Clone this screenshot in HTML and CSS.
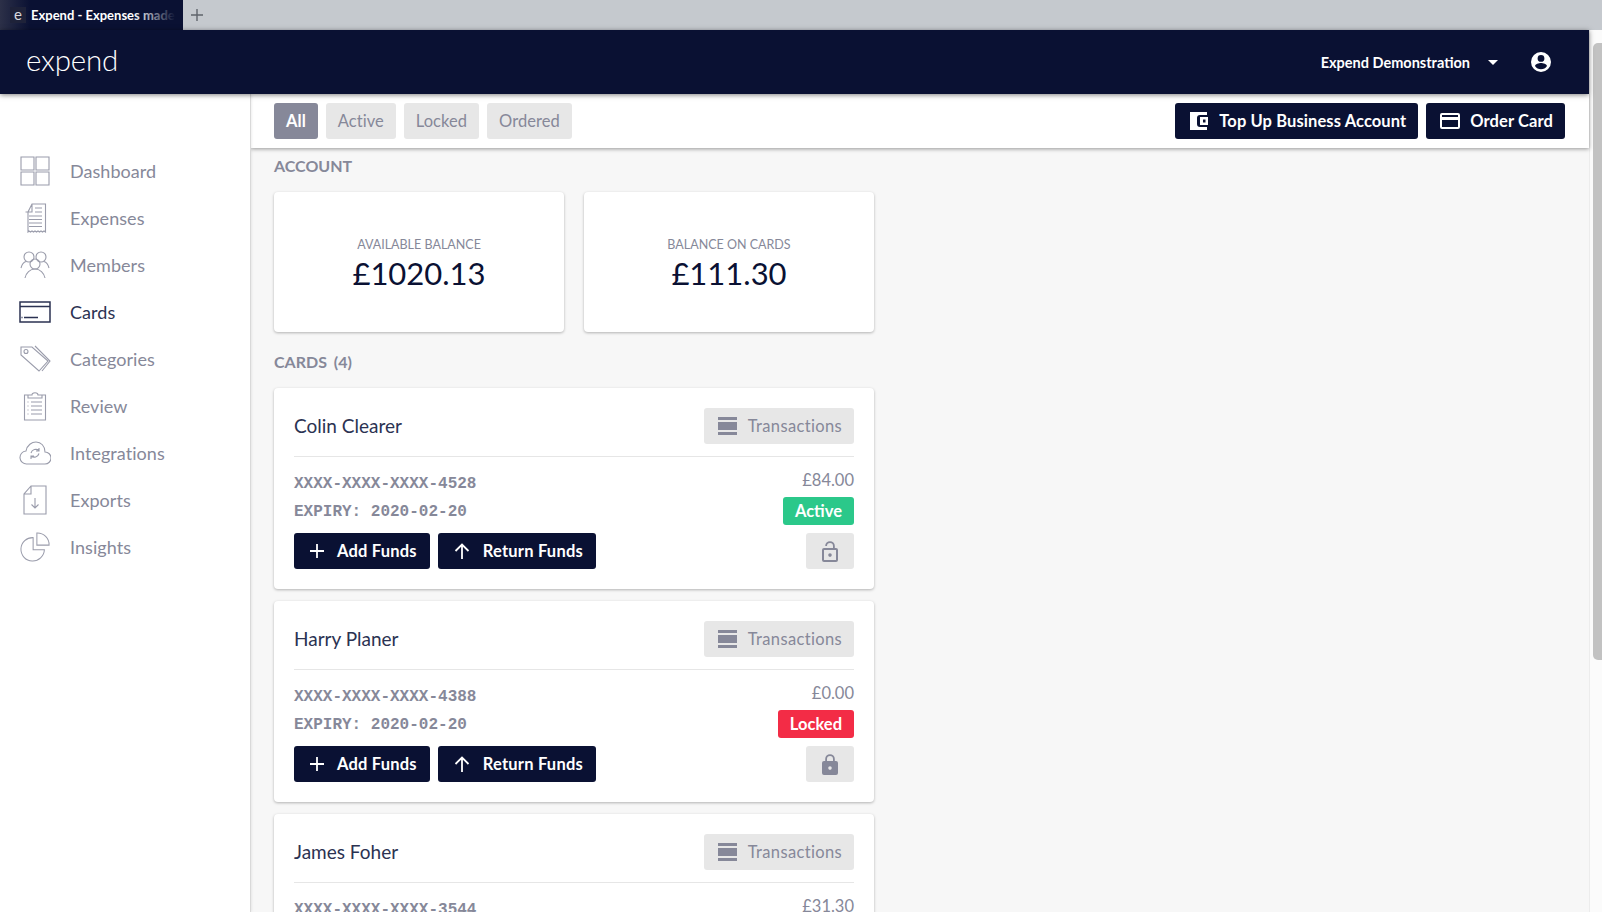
FILE: index.html
```html
<!DOCTYPE html>
<html lang="en">
<head>
    <meta charset="UTF-8">
    <title>Expend - Expenses made simple</title>
    <link rel="stylesheet" href="styles.css">
</head>
<body>
    <div class="tabBar">
        <div class="tab">
            <span class="favicon">e</span>
            <span class="tabTitle">Expend - Expenses made simple</span>
        </div>
        <svg class="newTab" width="12" height="12" viewBox="0 0 12 12"><path d="M6 0v12M0 6h12" stroke="#5f646b" stroke-width="1.4"/></svg>
    </div>
    <div class="window">
        <div class="app">
            <header class="topBar">
                <div class="logo">expend</div>
                <div class="account">
                    <span>Expend Demonstration</span>
                    <span class="caret"></span>
                    <svg width="24" height="24" viewBox="0 0 24 24"><path fill="#fff" d="M12 2a10 10 0 1 0 0 20 10 10 0 0 0 0-20zm0 3a3.400 3.400 0 1 1 0 6.800A3.400 3.400 0 0 1 12 5zm0 14.200a7.300 7.300 0 0 1-6-3.200c0-2 4-3.100 6-3.100s6 1.100 6 3.100a7.300 7.300 0 0 1-6 3.200z"/></svg>
                </div>
            </header>
            <div class="body">
                <nav class="sidebar">
                    <a class="navItem">
                        <svg class="navIcon" viewBox="0 0 30 30"><path d="M1 1h13v13H1zM16 1h13v13H16zM1 16h13v13H1zM16 16h13v13H16z"/></svg>
                        Dashboard
                    </a>
                    <a class="navItem">
                        <svg class="navIcon" viewBox="0 0 30 30"><path d="M12 1h13.500v28l-1.500-1-1.500 1-1.500-1-1.500 1-1.500-1-1.500 1-1.500-1-1.500 1-1.500-1-1.500 1-1.500-1-1 1V9zM12 1v8H5.500M9 13h13M9 16.500h13M9 20h13M9 23.500h13M15 5h7M15 9h7"/></svg>
                        Expenses
                    </a>
                    <a class="navItem">
                        <svg class="navIcon" viewBox="0 0 30 30"><circle cx="9" cy="7" r="5"/><circle cx="21" cy="7" r="5"/><circle cx="15" cy="14" r="5"/><path d="M1 18c1-4 3-6 5-6.500M29 18c-1-4-3-6-5-6.500M5 28c1-5 5-9 10-9s9 4 10 9"/></svg>
                        Members
                    </a>
                    <a class="navItem active">
                        <svg class="navIcon wide" viewBox="0 0 32 22"><path d="M1 1h30v20H1zM1 5.500h30M5 16.500h14M2.500 16.500h1"/></svg>
                        Cards
                    </a>
                    <a class="navItem">
                        <svg class="navIcon wide" viewBox="0 0 32 28"><path d="M2 2h11l16 14-9 10L2 10zM16 1l15 15-8 10"/><circle cx="7" cy="6.500" r="2"/></svg>
                        Categories
                    </a>
                    <a class="navItem">
                        <svg class="navIcon" viewBox="0 0 30 30"><path d="M8 4H4.500v25h21V4H22M8 7V4h4c0-3 6-3 6 0h4v3zM11 11h11M11 15h11M11 19h11M11 23h11M7.500 11h1M7.500 15h1M7.500 19h1M7.500 23h1"/></svg>
                        Review
                    </a>
                    <a class="navItem">
                        <svg class="navIcon wide" viewBox="0 0 32 24"><path d="M8 23a6.500 6.500 0 0 1-1-13C8 4 13 1 17 1c5 0 9 4 9 10a6 6 0 0 1 0 12zM12 12a5 5 0 0 1 8-2.500M20 7v3h-3M20 12.500a5 5 0 0 1-8 2.500M12 18v-3h3"/></svg>
                        Integrations
                    </a>
                    <a class="navItem">
                        <svg class="navIcon" viewBox="0 0 30 30"><path d="M11 1h15v28H4V9zM11 1v8H4M15 13v10M11.500 19.500L15 23l3.500-3.500"/></svg>
                        Exports
                    </a>
                    <a class="navItem">
                        <svg class="navIcon wide" viewBox="0 0 32 32"><path d="M14 6A12.500 12.500 0 1 0 26 19H14zM18 1a12.500 12.500 0 0 1 13 13H18z"/></svg>
                        Insights
                    </a>
                </nav>
                <main class="main">
                    <div class="toolbar">
                        <div class="filters">
                            <button class="btn grey selected">All</button>
                            <button class="btn grey">Active</button>
                            <button class="btn grey">Locked</button>
                            <button class="btn grey">Ordered</button>
                        </div>
                        <div class="actions">
                            <button class="btn dark">
                                <svg width="20" height="20" viewBox="0 0 20 20"><path fill="#fff" fill-rule="evenodd" d="M1 1h17v3h-7a3 3 0 0 0-3 3v6a3 3 0 0 0 3 3h7v3H1zM11 6h8v8h-8zm3 2.500v3h2.500v-3z"/></svg>
                                Top Up Business Account
                            </button>
                            <button class="btn dark">
                                <svg width="20" height="16" viewBox="0 0 20 16"><path fill="#fff" fill-rule="evenodd" d="M2 0h16a2 2 0 0 1 2 2v12a2 2 0 0 1-2 2H2a2 2 0 0 1-2-2V2a2 2 0 0 1 2-2zm0 2v2h16V2zm0 5v7h16V7z"/></svg>
                                Order Card
                            </button>
                        </div>
                    </div>
                    <div class="content">
                        <h2 class="sectionTitle">ACCOUNT</h2>
                        <div class="balances">
                            <div class="panel balance">
                                <div class="balanceLabel">AVAILABLE BALANCE</div>
                                <div class="balanceValue">£1020.13</div>
                            </div>
                            <div class="panel balance">
                                <div class="balanceLabel">BALANCE ON CARDS</div>
                                <div class="balanceValue">£111.30</div>
                            </div>
                        </div>
                        <h2 class="sectionTitle cardsTitle">CARDS (4)</h2>

                        <div class="panel card">
                            <div class="cardHead">
                                <span class="cardName">Colin Clearer</span>
                                <button class="btn grey txBtn">
                                    <svg class="txIcon" width="19" height="18" viewBox="0 0 19 18"><path d="M0 0h19v3H0zM0 5h19v8H0zM0 15h19v3H0z"/></svg>
                                    Transactions
                                </button>
                            </div>
                            <div class="cardBody">
                                <div class="cardInfo">
                                    <div class="mono">XXXX-XXXX-XXXX-4528</div>
                                    <div class="mono">EXPIRY: 2020-02-20</div>
                                    <div class="cardBtns">
                                        <button class="btn dark">
                                            <svg width="14" height="14" viewBox="0 0 14 14"><path d="M7 0v14M0 7h14" stroke="#fff" stroke-width="1.800"/></svg>
                                            Add Funds
                                        </button>
                                        <button class="btn dark">
                                            <svg width="16" height="16" viewBox="0 0 16 16"><path d="M8 16V1.500M1.500 8L8 1.500 14.500 8" stroke="#fff" stroke-width="1.800" fill="none"/></svg>
                                            Return Funds
                                        </button>
                                    </div>
                                </div>
                                <div class="cardStatus">
                                    <div class="amount">£84.00</div>
                                    <div class="badge green">Active</div>
                                    <button class="btn grey lockBtn">
                                        <svg width="16" height="21" viewBox="0 0 16 21"><path fill="#868899" fill-rule="evenodd" d="M2 7h9V5a3 3 0 0 0-6 0H3.200a4.800 4.800 0 0 1 9.600 0v2H14a2 2 0 0 1 2 2v10a2 2 0 0 1-2 2H2a2 2 0 0 1-2-2V9a2 2 0 0 1 2-2zm0 2v10h12V9zm6 3.300a1.800 1.800 0 1 1 0 3.600 1.800 1.800 0 0 1 0-3.600z"/></svg>
                                    </button>
                                </div>
                            </div>
                        </div>

                        <div class="panel card">
                            <div class="cardHead">
                                <span class="cardName">Harry Planer</span>
                                <button class="btn grey txBtn">
                                    <svg class="txIcon" width="19" height="18" viewBox="0 0 19 18"><path d="M0 0h19v3H0zM0 5h19v8H0zM0 15h19v3H0z"/></svg>
                                    Transactions
                                </button>
                            </div>
                            <div class="cardBody">
                                <div class="cardInfo">
                                    <div class="mono">XXXX-XXXX-XXXX-4388</div>
                                    <div class="mono">EXPIRY: 2020-02-20</div>
                                    <div class="cardBtns">
                                        <button class="btn dark">
                                            <svg width="14" height="14" viewBox="0 0 14 14"><path d="M7 0v14M0 7h14" stroke="#fff" stroke-width="1.800"/></svg>
                                            Add Funds
                                        </button>
                                        <button class="btn dark">
                                            <svg width="16" height="16" viewBox="0 0 16 16"><path d="M8 16V1.500M1.500 8L8 1.500 14.500 8" stroke="#fff" stroke-width="1.800" fill="none"/></svg>
                                            Return Funds
                                        </button>
                                    </div>
                                </div>
                                <div class="cardStatus">
                                    <div class="amount">£0.00</div>
                                    <div class="badge red">Locked</div>
                                    <button class="btn grey lockBtn">
                                        <svg width="16" height="21" viewBox="0 0 16 21"><path fill="#868899" fill-rule="evenodd" d="M2 7h1.200V5a4.800 4.800 0 0 1 9.600 0v2H14a2 2 0 0 1 2 2v10a2 2 0 0 1-2 2H2a2 2 0 0 1-2-2V9a2 2 0 0 1 2-2zm3 0h6V5a3 3 0 0 0-6 0zm3 5.300a1.800 1.800 0 1 0 0 3.600 1.800 1.800 0 0 0 0-3.600z"/></svg>
                                    </button>
                                </div>
                            </div>
                        </div>

                        <div class="panel card">
                            <div class="cardHead">
                                <span class="cardName">James Foher</span>
                                <button class="btn grey txBtn">
                                    <svg class="txIcon" width="19" height="18" viewBox="0 0 19 18"><path d="M0 0h19v3H0zM0 5h19v8H0zM0 15h19v3H0z"/></svg>
                                    Transactions
                                </button>
                            </div>
                            <div class="cardBody">
                                <div class="cardInfo">
                                    <div class="mono">XXXX-XXXX-XXXX-3544</div>
                                </div>
                                <div class="cardStatus">
                                    <div class="amount">£31.30</div>
                                </div>
                            </div>
                        </div>
                    </div>
                </main>
            </div>
        </div>
        <div class="scrollTrack"><div class="scrollThumb"></div></div>
    </div>
</body>
</html>
```

FILE: styles.css
```css
html, body {
    height: 100%;
}
body {
    margin: 0;
    height: 912px;
    overflow: hidden;
    display: flex;
    flex-direction: column;
    font-family: Lato, "Open Sans", sans-serif;
    color: #868899;
    background: #fff;
}
.tabBar {
    height: 30px;
    flex: none;
    display: flex;
    align-items: center;
    background: #c5c9ce;
}
.tab {
    width: 183px;
    height: 30px;
    display: flex;
    align-items: center;
    gap: 5px;
    box-sizing: border-box;
    padding-left: 10px;
    background: linear-gradient(90deg, #2c3048, #0a1133 30px);
    overflow: hidden;
    position: relative;
}
.tab::after {
    content: "";
    position: absolute;
    right: 0;
    top: 0;
    width: 50px;
    height: 30px;
    background: linear-gradient(90deg, rgba(10, 17, 51, 0), #0a1133 85%);
}
.favicon {
    width: 16px;
    height: 16px;
    flex: none;
    background: #1e2239;
    color: #d8d9de;
    font-size: 15px;
    line-height: 14px;
    text-align: center;
}
.tabTitle {
    color: #fff;
    font-size: 13px;
    font-weight: 700;
    white-space: nowrap;
}
.newTab {
    margin-left: 8px;
}
.window {
    flex: 1;
    min-height: 0;
    display: flex;
}
.app {
    flex: 1;
    min-width: 0;
    display: flex;
    flex-direction: column;
}
.scrollTrack {
    width: 13px;
    flex: none;
    background: #fbfbfb;
    border-left: 1px solid #ececec;
    box-sizing: border-box;
    padding: 13px 0 0 3px;
}
.scrollThumb {
    height: 617px;
    background: #c2c2c2;
    border-radius: 5px 0 0 5px;
}
.topBar {
    height: 64px;
    flex: none;
    display: flex;
    align-items: center;
    justify-content: space-between;
    padding: 0 36px 0 26px;
    background: #0a1133;
    box-shadow: 0 1px 5px rgba(0, 0, 0, 0.5);
    position: relative;
    z-index: 2;
}
.logo {
    color: #fff;
    font-size: 29.500px;
    font-weight: 300;
    letter-spacing: -0.2px;
    line-height: 40px;
    padding-bottom: 4px;
}
.account {
    display: flex;
    align-items: center;
    color: #fff;
    font-size: 14.500px;
    font-weight: 700;
}
.caret {
    width: 0;
    height: 0;
    margin: 0 31px 0 18px;
    border-left: 5px solid transparent;
    border-right: 5px solid transparent;
    border-top: 5px solid #fff;
}
.body {
    flex: 1;
    min-height: 0;
    display: flex;
}
.sidebar {
    width: 251px;
    flex: none;
    box-sizing: border-box;
    padding-top: 53px;
    background: #fff;
    border-right: 1px solid #d9d9d9;
    box-shadow: 0 0 3px rgba(0, 0, 0, 0.12);
    position: relative;
    z-index: 1;
}
.navItem {
    height: 47px;
    display: flex;
    align-items: center;
    font-size: 18px;
    letter-spacing: 0.05px;
}
.navItem.active {
    color: #2b3252;
}
.navIcon {
    width: 30px;
    height: 30px;
    margin: 0 20px;
    fill: none;
    stroke: #9a9cab;
    stroke-width: 1.100;
}
.navIcon.wide {
    width: 32px;
    margin: 0 19px 0 19px;
}
.active .navIcon {
    stroke: #2b3252;
    stroke-width: 1.500;
}
.main {
    flex: 1;
    min-width: 0;
    display: flex;
    flex-direction: column;
    background: #f7f7f7;
}
.toolbar {
    height: 54px;
    flex: none;
    box-sizing: border-box;
    display: flex;
    align-items: center;
    justify-content: space-between;
    padding: 0 24px 0 23px;
    background: #fff;
    box-shadow: 0 1px 4px rgba(0, 0, 0, 0.4);
    position: relative;
}
.filters, .actions {
    display: flex;
    gap: 8px;
}
.btn {
    height: 36px;
    display: inline-flex;
    align-items: center;
    padding: 0 12px;
    border: none;
    border-radius: 3px;
    font-family: inherit;
    font-size: 16.500px;
    font-weight: 400;
    white-space: nowrap;
}
.btn.grey {
    background: #e7e7e7;
    color: #868899;
}
.btn.grey.selected {
    background: #868899;
    color: #fff;
    font-weight: 700;
}
.btn.dark {
    background: #0a1133;
    color: #fff;
    font-weight: 700;
    gap: 10px;
    padding-left: 14px;
}
.btn.grey.txBtn {
    padding-left: 14px;
    letter-spacing: 0.35px;
}
.filters .btn {
    letter-spacing: 0.05px;
}
.actions .btn {
    letter-spacing: 0.1px;
}
.content {
    flex: 1;
    padding: 0 23px;
    overflow: hidden;
}
.sectionTitle {
    margin: 9px 0 0;
    font-size: 16px;
    line-height: 18px;
    font-weight: 700;
    word-spacing: 3px;
}
.balances {
    display: flex;
    gap: 20px;
    margin-top: 17px;
}
.panel {
    background: #fff;
    border-radius: 4px;
    box-shadow: 0 1px 3px rgba(0, 0, 0, 0.28);
}
.balance {
    width: 290px;
    height: 140px;
    box-sizing: border-box;
    padding-top: 6px;
    display: flex;
    flex-direction: column;
    align-items: center;
    justify-content: center;
}
.balanceLabel {
    font-size: 12.500px;
    line-height: 16px;
}
.balanceValue {
    color: #0a1133;
    font-size: 31px;
    line-height: 40px;
}
.cardsTitle {
    margin-top: 21px;
    margin-bottom: 17px;
}
.card {
    width: 600px;
    box-sizing: border-box;
    padding: 20px 20px 20px;
    margin-bottom: 12px;
}
.cardHead {
    display: flex;
    align-items: center;
    justify-content: space-between;
    padding-bottom: 12px;
    border-bottom: 1px solid #e6e6e6;
}
.cardName {
    color: #2b3252;
    font-size: 19px;
    padding-bottom: 1px;
}
.txIcon {
    fill: #868899;
    margin-right: 11px;
}
.cardBody {
    display: flex;
    justify-content: space-between;
    padding-top: 12px;
}
.mono {
    font-family: "Liberation Mono", monospace;
    font-size: 16px;
    font-weight: 700;
    line-height: 28px;
}
.mono:first-child {
    margin-top: 1px;
}
.cardBtns {
    display: flex;
    gap: 8px;
    margin-top: 7px;
}
.cardBtns .btn.dark {
    gap: 13px;
    padding: 0 13px 0 16px;
    letter-spacing: 0.2px;
}
.cardStatus {
    display: flex;
    flex-direction: column;
    align-items: flex-end;
    gap: 8px;
}
.amount {
    font-size: 16.500px;
    line-height: 20px;
    padding-top: 1px;
    margin-bottom: -1px;
}
.badge {
    height: 28px;
    display: flex;
    align-items: center;
    padding: 0 12px;
    border-radius: 3px;
    color: #fff;
    font-size: 16.500px;
    font-weight: 700;
}
.badge.green {
    background: #2bc88a;
}
.badge.red {
    background: #f32c46;
}
.lockBtn {
    width: 48px;
    justify-content: center;
    padding: 0;
}
```
